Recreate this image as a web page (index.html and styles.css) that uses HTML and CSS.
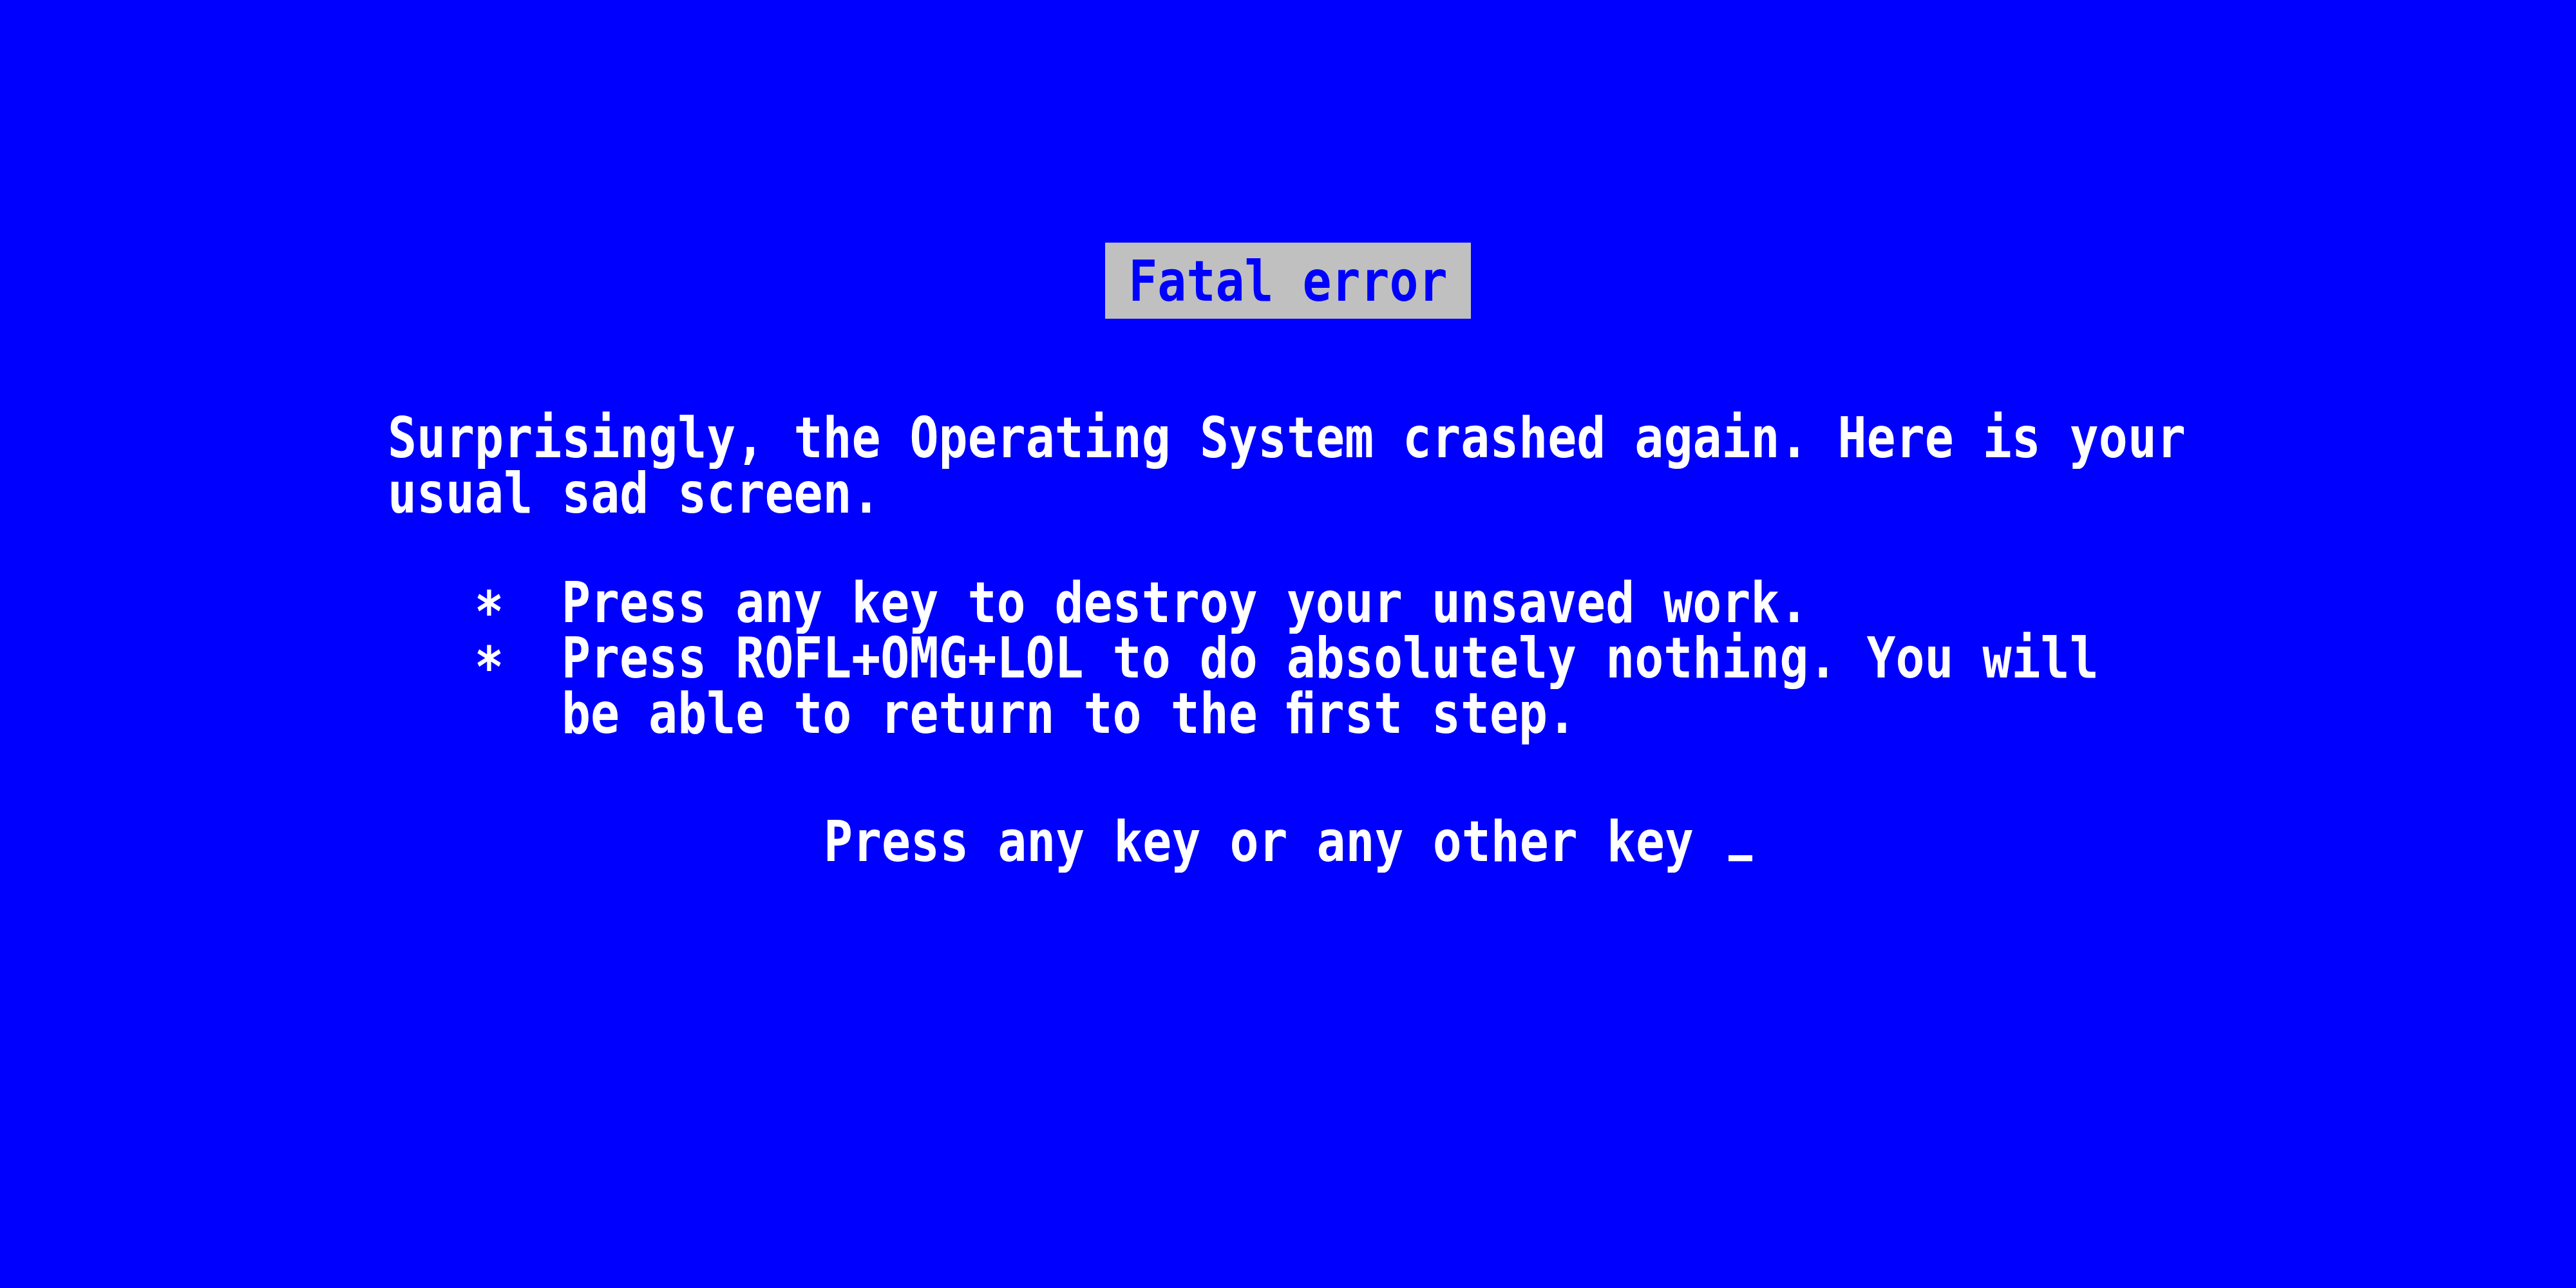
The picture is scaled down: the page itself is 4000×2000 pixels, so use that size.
FILE: index.html
```html
<!DOCTYPE html>
<html lang="en">
  <head>
    <meta charset="UTF-8" />
    <meta name="viewport" content="width=device-width, initial-scale=1.0" />
    <title>Fatal error</title>
    <link rel="stylesheet" href="styles.css">
  </head>
  <body>
    <div class="screen">
      <div class="title">
        <span class="title-label">Fatal error</span>
      </div>

      <p class="message">
        Surprisingly, the Operating System crashed again. Here is your<br>usual sad screen.
      </p>

      <ul class="options">
        <li><span class="bullet">*</span><span>Press any key to destroy your unsaved work.</span></li>
        <li><span class="bullet">*</span><span>Press ROFL+OMG+LOL to do absolutely nothing. You will<br>be able to return to the ﬁrst step.</span></li>
      </ul>

      <p class="prompt">Press any key or any other key <span class="cursor"></span></p>
    </div>
  </body>
</html>
```

FILE: styles.css
```css
body {
  margin: 0;
  min-height: 100vh;
  background-color: #0000ff;
  color: #ffffff;
  font-family: "DejaVu Sans Mono", "Liberation Mono", monospace;
  font-size: 74.8px;
  font-weight: bold;
  line-height: 73.5px;
}
/* text-mode glyphs are taller than they are wide: stretch the whole screen */
.screen {
  width: 2796px;
  margin: 0 auto;
  padding-top: 322px;
  white-space: nowrap;
  transform: scaleY(1.17);
  transform-origin: top center;
}
.title {
  display: flex;
  justify-content: center;
  margin-bottom: 122px;
}
.title-label {
  background: #c0c0c0;
  color: #0000ff;
  padding: 14.5px 36px 12.8px;
}
.message {
  margin: 0 0 72px;
}
.options {
  list-style: none;
  margin: 0;
  padding: 0 0 0 135px;
}
.options li {
  display: flex;
}
.bullet {
  flex: none;
  width: 135px;
  transform: translateY(12px);
}
.prompt {
  margin: 97px 0 0;
  text-align: center;
}
.cursor {
  display: inline-block;
  width: 37px;
  height: 8px;
  margin-left: 9px;
  background: #ffffff;
}
```
